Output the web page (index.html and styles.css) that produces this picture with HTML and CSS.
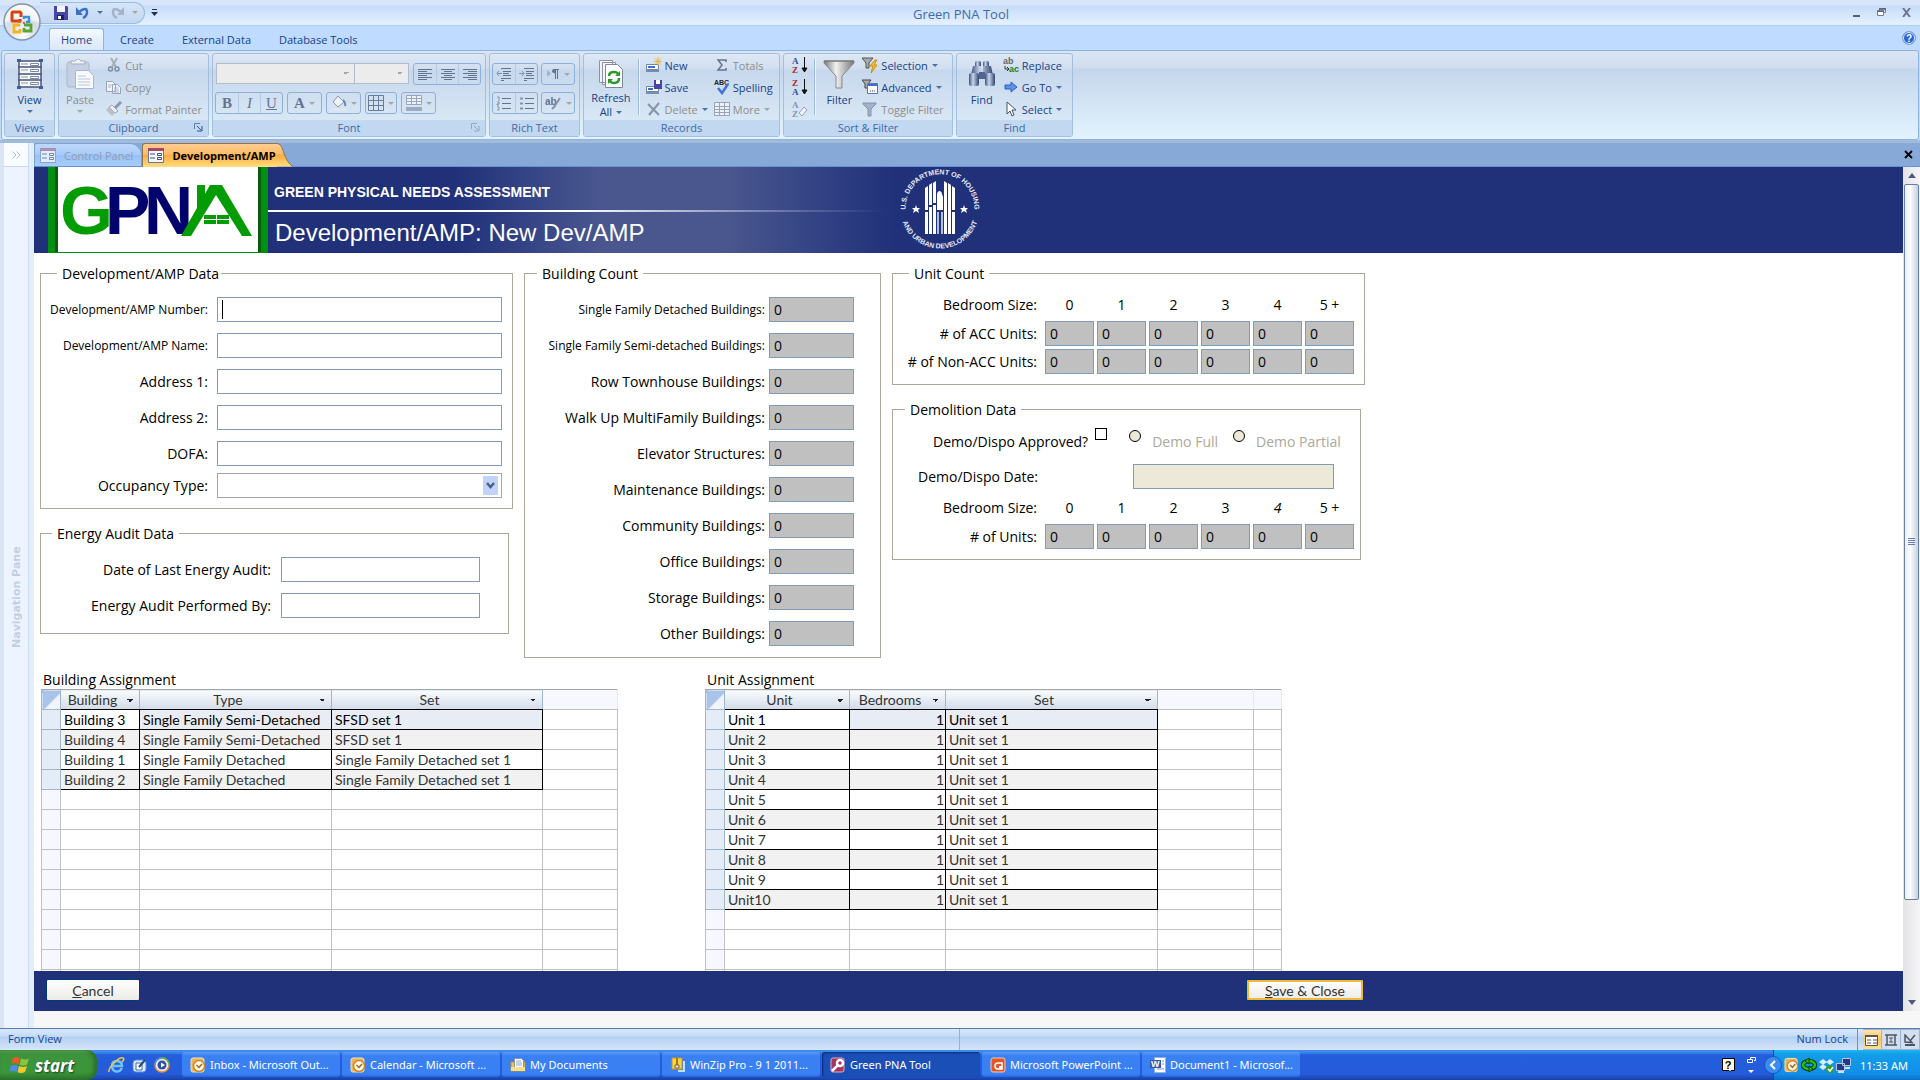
FILE: index.html
```html
<!DOCTYPE html>
<html lang="en">
<head>
    <meta charset="UTF-8">
    <meta name="viewport" content="width=device-width, initial-scale=1.0">
    <title>Green PNA Tool</title>
    <link rel="stylesheet" href="styles.css">
</head>
<body>

<header class="titlebar">
    <button class="orb" aria-label="Office Button">
        <svg width="38" height="38" viewBox="0 0 38 38">
            <defs>
                <radialGradient id="orbFill" cx="50%" cy="85%" r="80%">
                    <stop offset="0" stop-color="#ffffff"/>
                    <stop offset="0.55" stop-color="#d3dbe6"/>
                    <stop offset="1" stop-color="#f4f6f9"/>
                </radialGradient>
            </defs>
            <circle cx="19" cy="19" r="18" fill="url(#orbFill)" stroke="#8493a8" stroke-width="1.5"/>
            <path d="M2 19a17 17 0 0 1 34 0q-17-5-34 0z" fill="#fff" opacity="0.6"/>
            <g fill="none" stroke-width="3">
                <path d="M17 16v2h-7a1 1 0 0 1-1-1v-7a1 1 0 0 1 1-1h7l1 1v4" stroke="#d8420f"/>
                <path d="M21 16v-2h5v5h-3" stroke="#3d8fd8" stroke-width="2.4"/>
                <path d="M17 22h-6v7h6v-3" stroke="#f5b31c" stroke-width="2.8"/>
                <path d="M21 22h7v6h-7v-3" stroke="#58a534" stroke-width="2.8"/>
            </g>
            <path d="M15 18h3v2h-3zM20 19h2v2h-2z" fill="#e8641b"/>
        </svg>
    </button>
    <div class="quick">
        <button aria-label="Save"><svg width="14" height="14" viewBox="0 0 14 14"><path d="M0 0h13l1 1v13H0z" fill="#4845a8"/><path d="M3 0h8v6H3z" fill="#f1f4fb"/><path d="M3 9h7v5H3z" fill="#20205c"/><path d="M4 10h3v3H4z" fill="#fff"/></svg></button>
        <button aria-label="Undo"><svg width="13" height="13" viewBox="0 0 13 13"><path d="M3 6q8-6 8 0 0 4-4 6" fill="none" stroke="#3d6fc6" stroke-width="2.5"/><path d="M0 1v8h7z" fill="#3d6fc6"/></svg></button>
        <i class="arrow"></i>
        <button aria-label="Redo" disabled><svg width="13" height="13" viewBox="0 0 13 13"><path d="M10 6Q2 0 2 6q0 4 4 6" fill="none" stroke="#a3b3ca" stroke-width="2.5"/><path d="M13 1v8H6z" fill="#a3b3ca"/></svg></button>
        <i class="arrow off"></i>
    </div>
    <button class="customize" aria-label="Customize"><svg width="7" height="7" viewBox="0 0 7 7"><path d="M1 0h5v1H1zM0 3h7L3.500 7z" fill="#1d2f5c"/></svg></button>
    <h1 class="title">Green PNA Tool</h1>
    <div class="winbtns">
        <button aria-label="Minimize"><svg width="9" height="12" viewBox="0 0 9 12"><path d="M1 8h7v2H1z" fill="#555f70"/></svg></button>
        <button aria-label="Restore"><svg width="9" height="9" viewBox="0 0 9 9"><path d="M2.500 3V.5h6v4H7" fill="none" stroke="#6c7f9c"/><path d="M.5 3.500h6v4h-6z" fill="#fff" stroke="#6c7f9c"/><path d="M2 1h7M0 3h7" stroke="#555f70" stroke-width="1.500"/></svg></button>
        <button aria-label="Close"><svg width="9" height="9" viewBox="0 0 9 9"><path d="M1 0l7 9M8 0L1 9" stroke="#6a7690" stroke-width="2"/></svg></button>
    </div>
</header>

<nav class="tabs">
    <a href="#" class="active">Home</a>
    <a href="#">Create</a>
    <a href="#">External Data</a>
    <a href="#">Database Tools</a>
    <button class="help" aria-label="Help"><svg width="14" height="14" viewBox="0 0 14 14"><circle cx="7" cy="7" r="6.500" fill="#2a64d2" stroke="#86a3cf"/><circle cx="7" cy="7" r="5.500" fill="none" stroke="#dbe9ff"/><text x="7" y="11" text-anchor="middle" font-size="10" class="glyph" fill="#fff">?</text></svg></button>
</nav>

<section class="ribbon">
    <div class="group views">
        <div class="tools">
            <button class="big">
                <svg width="26" height="30" viewBox="0 0 26 30"><path d="M2 2h22v26H2z" fill="#f5f8fc" stroke="#49567c" stroke-width="1.500"/><path d="M1 8h24M1 15h24M1 21h24" stroke="#49567c" stroke-width="1.500"/><path d="M4 5h7M4 11h7M4 18h7M4 24h7" stroke="#8d97ad"/><path d="M13.500 4.500h8v2h-8zM13.500 10.500h8v2h-8zM13.500 17.500h8v2h-8zM13.500 23.500h8v2h-8z" fill="#fff" stroke="#7d88a3"/><path d="M0 0h4v3H0zM22 0h4v3h-4zM0 27h4v3H0zM22 27h4v3h-4z" fill="#3f5da0"/></svg>
                <span>View</span><i class="arrow"></i>
            </button>
        </div>
        <h2>Views</h2>
    </div>
    <div class="group clipboard">
        <div class="tools">
            <button class="big" disabled>
                <svg width="28" height="30" viewBox="0 0 28 30"><rect x="1" y="3" width="22" height="25" rx="2" fill="#c5d0e2" stroke="#a9b8cf"/><path d="M5 5h14V2h-4l-2-2h-2L9 2H5z" fill="#eef2f8" stroke="#a3adbf"/><path d="M9.500 11.500h13l5 5v13h-18z" fill="#f7f9fc" stroke="#a9b8cf"/><path d="M12 17h8M12 20h12M12 23h12M12 26h12" stroke="#b9c7de"/></svg>
                <span>Paste</span><i class="arrow off"></i>
            </button>
            <div class="stack">
                <button class="cmd" disabled><svg width="16" height="16" viewBox="0 0 16 16"><path d="M5 1l5 9M11 1L6 10" stroke="#a7aebb" stroke-width="2"/><circle cx="4.500" cy="12" r="2" fill="none" stroke="#7e8ca6" stroke-width="1.500"/><circle cx="11" cy="12" r="2" fill="none" stroke="#7e8ca6" stroke-width="1.500"/></svg>Cut</button>
                <button class="cmd" disabled><svg width="16" height="16" viewBox="0 0 16 16"><path d="M.5 2.500h6l3 3v7h-9zM6.500 5.500h5l3 3v6h-8z" fill="#f1f4f9" stroke="#95a3bd"/><path d="M2 6h4M2 8h3M8 9h4M8 11h5M8 13h5" stroke="#aab6cc"/></svg>Copy</button>
                <button class="cmd" disabled><svg width="16" height="16" viewBox="0 0 16 16"><path d="M15 1l-6 6" stroke="#8a96ac" stroke-width="3"/><path d="M6 4l6 6-3 2-6-6z" fill="#eceff5" stroke="#9aa6ba"/><path d="M3 6l6 6-3 3-6-6z" fill="#b9c0cb"/></svg>Format Painter</button>
            </div>
        </div>
        <h2>Clipboard<svg class="launcher" width="9" height="9" viewBox="0 0 9 9"><path d="M.5 6V.5H6" fill="none" stroke="#5a7fb5"/><path d="M3 3l4 4M8 3v5H3" fill="none" stroke="#33507f"/></svg></h2>
    </div>
    <div class="group font">
        <div class="tools rows">
            <div class="line">
                <select class="face" aria-label="Font" disabled><option></option></select>
                <select class="size" aria-label="Font Size" disabled><option></option></select>
                <div class="set">
                    <button disabled aria-label="Align Left"><svg width="16" height="12" viewBox="0 0 16 12"><path d="M1 1.500h14M1 3.500h9M1 5.500h14M1 7.500h9M1 9.500h14M1 11.500h9" stroke="#66738f"/></svg></button>
                    <button disabled aria-label="Center"><svg width="16" height="12" viewBox="0 0 16 12"><path d="M1 1.500h14M4 3.500h8M1 5.500h14M4 7.500h8M1 9.500h14M4 11.500h8" stroke="#66738f"/></svg></button>
                    <button disabled aria-label="Align Right"><svg width="16" height="12" viewBox="0 0 16 12"><path d="M1 1.500h14M6 3.500h9M1 5.500h14M6 7.500h9M1 9.500h14M6 11.500h9" stroke="#66738f"/></svg></button>
                </div>
            </div>
            <div class="line">
                <div class="set letters">
                    <button disabled><b>B</b></button>
                    <button disabled><em>I</em></button>
                    <button disabled><u>U</u></button>
                </div>
                <div class="set wide"><button disabled><span class="letter">A</span><i class="arrow off"></i></button></div>
                <div class="set wide"><button disabled aria-label="Fill Color"><svg width="16" height="16" viewBox="0 0 16 16"><path d="M7 1l6 6-6 5-5-5z" fill="#eef2f7" stroke="#8a97af"/><path d="M12 5q3 2 2 6" fill="none" stroke="#7485a5" stroke-width="2"/><path d="M0 13h16v3H0z" fill="#dfe6ef"/></svg><i class="arrow off"></i></button></div>
                <div class="set mid"><button disabled aria-label="Gridlines"><svg width="16" height="16" viewBox="0 0 16 16"><path d="M.5.5h15v15H.5zM5.500 0v16M10.500 0v16M0 5.500h16M0 10.500h16" fill="none" stroke="#6b7c9b"/></svg><i class="arrow off"></i></button></div>
                <div class="set wide"><button disabled aria-label="Alternate Fill"><svg width="16" height="16" viewBox="0 0 16 16"><path d="M.5.5h15v9H.5zM5.500 0v10M10.500 0v10M0 3.500h16M0 6.500h16" fill="#eef2f7" stroke="#98a5bd"/><path d="M0 12h16v4H0z" fill="#9aa9c4"/></svg><i class="arrow off"></i></button></div>
            </div>
        </div>
        <h2>Font<svg class="launcher" width="9" height="9" viewBox="0 0 9 9"><path d="M.5 6V.5H6M3 3l4 4M8 3v5H3" fill="none" stroke="#94a5bf"/></svg></h2>
    </div>
    <div class="group rich">
        <div class="tools rows">
            <div class="line">
                <div class="set">
                    <button disabled aria-label="Decrease Indent"><svg width="16" height="15" viewBox="0 0 16 15"><path d="M5 1.500h10M7 4.500h8M7 6.500h6M7 8.500h8M5 11.500h10M5 13.500h3" stroke="#66738f"/><path d="M1 6.500h5M3 4L1 6.500 3 9" fill="none" stroke="#8593ad"/></svg></button>
                    <button disabled aria-label="Increase Indent"><svg width="16" height="15" viewBox="0 0 16 15"><path d="M5 1.500h10M7 4.500h8M7 6.500h6M7 8.500h8M5 11.500h10M5 13.500h3" stroke="#66738f"/><path d="M0 6.500h5M3 4l2 2.500L3 9" fill="none" stroke="#8593ad"/></svg></button>
                </div>
                <div class="set wide"><button disabled aria-label="Direction"><svg width="14" height="12" viewBox="0 0 14 12"><path d="M1 2v7l4-3.500z" fill="#a5b1c7"/><path d="M9.500 1v10M11.500 1v10M8 1.500h5M9 2.500v3" stroke="#66738f"/><circle cx="8" cy="3" r="2" fill="#66738f"/></svg><i class="arrow off"></i></button></div>
            </div>
            <div class="line">
                <div class="set">
                    <button disabled aria-label="Numbering"><svg width="16" height="15" viewBox="0 0 16 15"><path d="M6 2.500h9M6 7.500h9M6 12.500h9" stroke="#66738f" stroke-width="1.200"/><path d="M1 1h2v4M1 6h2v2H1v1h2M1 11h2v3H1" fill="none" stroke="#8593ad"/></svg></button>
                    <button disabled aria-label="Bullets"><svg width="16" height="15" viewBox="0 0 16 15"><path d="M6 2.500h9M6 7.500h9M6 12.500h9" stroke="#66738f" stroke-width="1.200"/><path d="M1 1.500h3v2H1zM1 6.500h3v2H1zM1 11.500h3v2H1z" fill="#8593ad"/></svg></button>
                </div>
                <div class="set wide"><button disabled aria-label="Highlight"><svg width="17" height="15" viewBox="0 0 17 15"><text x="0" y="9" font-size="10" class="glyph" fill="#66738f">ab</text><path d="M15 2l-6 9-2 2" stroke="#8593ad" stroke-width="2" fill="none"/></svg><i class="arrow off"></i></button></div>
            </div>
        </div>
        <h2>Rich Text</h2>
    </div>
    <div class="group records">
        <div class="tools">
            <button class="big">
                <svg width="26" height="30" viewBox="0 0 26 30"><path d="M1.500 1.500h13v22h-13zM4.500 3.500h13v22h-13z" fill="#f3f5f9" stroke="#8b93a5"/><path d="M7.500 5.500h12l5 5v18h-17z" fill="#fff" stroke="#7d879c"/><path d="M11 17q0-4 5-4 3 0 4 2M21 19q0 5-5 5-3 0-4-2" fill="none" stroke="#2e9a2e" stroke-width="2.500"/><path d="M22 12v5h-5zM10 25v-5h5z" fill="#2e9a2e"/></svg>
                <span>Refresh<br>All<i class="arrow"></i></span>
            </button>
            <hr>
            <div class="stack">
                <button class="cmd"><svg width="16" height="16" viewBox="0 0 16 16"><path d="M.5 7.500h12v5H.5z" fill="#fff" stroke="#6d83ad"/><path d="M2 9h7v2H2z" fill="#3b6fd0"/><path d="M0 14h13" stroke="#2b3f6b"/><path d="M12 0v9M8 4.500h8M9 1.500l6 6M15 1.500l-6 6" stroke="#eab63a"/></svg>New</button>
                <button class="cmd"><svg width="16" height="16" viewBox="0 0 16 16"><path d="M.5 7.500h12v5H.5z" fill="#fff" stroke="#6d83ad"/><path d="M2 9h5v2H2z" fill="#3b6fd0"/><path d="M0 14h13" stroke="#2b3f6b"/><path d="M8 1h8v9H8z" fill="#4845a8"/><path d="M10 1h4v4h-4z" fill="#fff"/></svg>Save</button>
                <button class="cmd" disabled><svg width="16" height="16" viewBox="0 0 16 16"><path d="M2 3l11 11M13 2L3 14" stroke="#8593ad" stroke-width="2"/></svg>Delete<i class="arrow"></i></button>
            </div>
            <div class="stack">
                <button class="cmd" disabled><svg width="16" height="16" viewBox="0 0 16 16"><path d="M12 5V3H4l4 5-4 5h8v-2" fill="none" stroke="#66738f" stroke-width="1.500"/></svg>Totals</button>
                <button class="cmd"><svg width="16" height="16" viewBox="0 0 16 16"><text x="0" y="6" font-size="7" class="glyph" fill="#222">ABC</text><path d="M4 9l4 5 6-9" fill="none" stroke="#3f74d4" stroke-width="2.500"/></svg>Spelling</button>
                <button class="cmd" disabled><svg width="16" height="16" viewBox="0 0 16 16"><path d="M.5 1.500h15v13H.5zM5.500 1v14M10.500 1v14M0 5.500h16M0 8.500h16M0 11.500h16" fill="#eef2f7" stroke="#95a3bd"/></svg>More<i class="arrow off"></i></button>
            </div>
        </div>
        <h2>Records</h2>
    </div>
    <div class="group sort">
        <div class="tools">
            <div class="stack">
                <button class="cmd" aria-label="Ascending"><svg width="16" height="18" viewBox="0 0 16 18"><text x="0" y="8" font-size="9" class="serif" fill="#2c4f9e">A</text><text x="0" y="17" font-size="9" class="serif" fill="#a12a2a">Z</text><path d="M12.500 1v14M10 12l2.500 4 2.500-4z" stroke="#111" fill="#111"/></svg></button>
                <button class="cmd" aria-label="Descending"><svg width="16" height="18" viewBox="0 0 16 18"><text x="0" y="8" font-size="9" class="serif" fill="#a12a2a">Z</text><text x="0" y="17" font-size="9" class="serif" fill="#2c4f9e">A</text><path d="M12.500 1v14M10 12l2.500 4 2.500-4z" stroke="#111" fill="#111"/></svg></button>
                <button class="cmd" aria-label="Clear Sorts" disabled><svg width="16" height="18" viewBox="0 0 16 18"><text x="0" y="8" font-size="9" class="serif" fill="#8593ad">A</text><text x="0" y="17" font-size="9" class="serif" fill="#8593ad">Z</text><path d="M7 13l5-6 3 3-5 6z" fill="#eef2f7" stroke="#95a3bd"/></svg></button>
            </div>
            <hr>
            <button class="big">
                <svg width="32" height="30" viewBox="0 0 32 30"><defs><linearGradient id="funnel"><stop offset="0" stop-color="#777"/><stop offset="0.4" stop-color="#f2f2f2"/><stop offset="1" stop-color="#777"/></linearGradient></defs><path d="M1 2h30v2L19 17v12h-6V17L1 4z" fill="url(#funnel)" stroke="#888"/><path d="M1 2h30" stroke="#6f6f6f"/></svg>
                <span>Filter</span>
            </button>
            <div class="stack">
                <button class="cmd"><svg width="16" height="16" viewBox="0 0 16 16"><path d="M0 1h11L7 6v5H4V6z" fill="#aaa" stroke="#555"/><path d="M13 3L8 9h3l-2 7 6-8h-3l3-5z" fill="#f7c331" stroke="#c98d13"/></svg>Selection<i class="arrow"></i></button>
                <button class="cmd"><svg width="16" height="16" viewBox="0 0 16 16"><path d="M0 1h9L6 5v4H3V5z" fill="#aaa" stroke="#444"/><path d="M5.500 4.500h10v10h-10z" fill="#fff" stroke="#5577b5"/><path d="M6 5h9v2H6z" fill="#3b6fd0"/><path d="M8 12h1M10 12h1M12 12h1" stroke="#333"/></svg>Advanced<i class="arrow"></i></button>
                <button class="cmd" disabled><svg width="16" height="16" viewBox="0 0 16 16"><path d="M1 2h13v1L9 8v7H6V8L1 3z" fill="#a3b2ca" stroke="#8092b0"/></svg>Toggle Filter</button>
            </div>
        </div>
        <h2>Sort &amp; Filter</h2>
    </div>
    <div class="group find">
        <div class="tools">
            <button class="big">
                <svg width="28" height="30" viewBox="0 0 28 30"><defs><linearGradient id="tube"><stop offset="0" stop-color="#3e5078"/><stop offset="0.4" stop-color="#c8d5ee"/><stop offset="1" stop-color="#33456e"/></linearGradient></defs><rect x="7" y="2" width="6" height="7" rx="2" fill="url(#tube)"/><rect x="15" y="2" width="6" height="7" rx="2" fill="url(#tube)"/><path d="M5 7h8v9H3zM15 7h8l2 9H15z" fill="url(#tube)"/><rect x="1" y="14" width="10" height="13" rx="2" fill="url(#tube)"/><rect x="17" y="14" width="10" height="13" rx="2" fill="url(#tube)"/><path d="M11 13h6v7h-6z" fill="#52648f"/></svg>
                <span>Find</span>
            </button>
            <div class="stack">
                <button class="cmd"><svg width="16" height="16" viewBox="0 0 16 16"><text x="0" y="7" font-size="9" class="glyph" fill="#666">ab</text><text x="6" y="15" font-size="9" class="glyph" fill="#1e7f1e">ac</text><path d="M2 9v3h3M4 10l2 2-2 2" fill="none" stroke="#333"/></svg>Replace</button>
                <button class="cmd"><svg width="16" height="16" viewBox="0 0 16 16"><path d="M2 6h6V3l6 5-6 5v-3H2z" fill="#5b93ec" stroke="#2e5fb8"/></svg>Go To<i class="arrow"></i></button>
                <button class="cmd"><svg width="16" height="16" viewBox="0 0 16 16"><path d="M4 1v12l3-3 2 5 2-1-2-5h4z" fill="#fff" stroke="#45526e"/></svg>Select<i class="arrow"></i></button>
            </div>
        </div>
        <h2>Find</h2>
    </div>
</section>

<div class="workspace">
    <aside class="navpane">
        <button class="expand" aria-label="Open Navigation Pane"><svg width="8" height="8" viewBox="0 0 8 8"><path d="M.5.5L4 4 .5 7.500M4.500.5L8 4 4.500 7.500" fill="none" stroke="#a9bdde"/></svg></button>
        <span>Navigation Pane</span>
    </aside>

    <div class="document">
        <div class="doctabs">
            <a href="#" class="doctab"><svg width="16" height="15" viewBox="0 0 16 15"><path d="M.5.5h15v14H.5z" fill="#e3ecfa" stroke="#8aa3cc"/><path d="M0 0h16v3H0z" fill="#a98fb5"/><path d="M2 6h5M2 10h5" stroke="#6f86b5"/><path d="M9.500 5.500h4v2h-4zM9.500 9.500h4v2h-4z" fill="#fff" stroke="#6f86b5"/></svg>Control Panel</a>
            <a href="#" class="doctab current"><svg width="16" height="15" viewBox="0 0 16 15"><path d="M.5.5h15v14H.5z" fill="#f4f6fc" stroke="#6577a5"/><path d="M0 0h16v3H0z" fill="#a64a6b"/><path d="M2 6h5M2 10h5" stroke="#3c4f86"/><path d="M9.500 5.500h4v2h-4zM9.500 9.500h4v2h-4z" fill="#fff" stroke="#3c4f86"/></svg>Development/AMP<svg class="slope" width="16" height="24" viewBox="0 0 16 24"><defs><linearGradient id="tabFill" x2="0" y2="1"><stop offset="0" stop-color="#ffcd92"/><stop offset="0.450" stop-color="#ffbb69"/><stop offset="0.500" stop-color="#ffab3f"/><stop offset="1" stop-color="#ffdf80"/></linearGradient></defs><path d="M0 .5q4 0 6 7 4 13 10 16H0z" fill="url(#tabFill)"/><path d="M0 .5q4 0 6 7 4 13 10 16" fill="none" stroke="#8c7450"/></svg></a>
            <button class="closetab" aria-label="Close Development/AMP"><svg width="9" height="9" viewBox="0 0 9 9"><path d="M1 1l7 7M8 1L1 8" stroke="#000" stroke-width="1.800"/></svg></button>
        </div>

        <div class="viewport">
            <main class="form">
                <div class="banner">
                    <svg class="logo" width="220" height="86" viewBox="0 0 220 86" role="img" aria-label="GPNA">
                        <path d="M0 0h220v86H0z" fill="#018f12"/>
                        <path d="M7 0h3v85H7zM210 0h3v85h-3z" fill="#0b5a12"/>
                        <path d="M10 0h200v85H10z" fill="#fff"/>
                        <text y="67" font-size="68" class="glyph"><tspan x="12" fill="#049c04">G</tspan><tspan x="57" fill="#02026c">P</tspan><tspan x="96" fill="#02026c">N</tspan></text>
                        <path d="M149 18h8v24l-8 8z" fill="#049c04"/>
                        <path d="M133 69L162 18h12l30 51h-10L168 28 143 69z" fill="#049c04"/>
                        <path d="M156 48h12v4h-12zM169 48h12v4h-12zM156 53h12v4h-12zM169 53h12v4h-12z" fill="#049c04"/>
                    </svg>
                    <div class="heading">
                        <p>GREEN PHYSICAL NEEDS ASSESSMENT</p>
                        <h2>Development/AMP: New Dev/AMP</h2>
                    </div>
                    <svg class="seal" width="84" height="84" viewBox="0 0 84 84">
                        <defs>
                            <path id="ringTop" d="M8.500 50a34.500 34.500 0 1 1 67 0"/>
                            <path id="ringBottom" d="M2.500 42a39.500 39.500 0 0 0 79 0"/>
                        </defs>
                        <g class="ring" fill="#e6ebf7">
                            <text><textPath href="#ringTop" startOffset="50%" text-anchor="middle">U.S. DEPARTMENT OF HOUSING</textPath></text>
                            <text><textPath href="#ringBottom" startOffset="50%" text-anchor="middle">AND URBAN DEVELOPMENT</textPath></text>
                        </g>
                        <path d="M18 38l1 3h3l-2 2 1 3-3-2-3 2 1-3-2-2h3zM66 38l1 3h3l-2 2 1 3-3-2-3 2 1-3-2-2h3z" fill="#fff"/>
                        <path d="M27 21l3-2v24h-3zM31 18l3-2v22h-3zM35 16l3-2v22h-3zM46 14l3 2v22h-3zM50 16l3 2v22h-3zM54 19l3 2v22h-3zM27 45h3v22h-3zM31 40h3v27h-3zM35 38h3v29h-3zM46 38h3v29h-3zM50 40h3v27h-3zM54 45h3v22h-3z" fill="#fff"/>
                        <path d="M39 43V28q0-4 3-4 2 1 2 3l1 3v13z" fill="#fff"/>
                        <path d="M39 45h2v22h-2zM43 45h2v22h-2z" fill="#b4bddc"/>
                    </svg>
                </div>

                <div class="body">
                    <div class="columns">
                        <div class="column">
                            <fieldset class="devdata">
                                <legend>Development/AMP Data</legend>
                                <label class="small" for="ampNumber">Development/AMP Number:</label>
                                <input type="text" id="ampNumber" class="caret">
                                <label class="small" for="ampName">Development/AMP Name:</label>
                                <input type="text" id="ampName">
                                <label for="address1">Address 1:</label>
                                <input type="text" id="address1">
                                <label for="address2">Address 2:</label>
                                <input type="text" id="address2">
                                <label for="dofa">DOFA:</label>
                                <input type="text" id="dofa">
                                <label for="occupancy">Occupancy Type:</label>
                                <div class="combo">
                                    <select id="occupancy"><option></option></select>
                                    <svg width="15" height="19" viewBox="0 0 15 19"><rect width="15" height="19" rx="1" fill="#c1d3fa"/><path d="M4 7l3.500 4L11 7" fill="none" stroke="#4d6185" stroke-width="2.500"/></svg>
                                </div>
                            </fieldset>
                            <fieldset class="energy">
                                <legend>Energy Audit Data</legend>
                                <label for="auditDate">Date of Last Energy Audit:</label>
                                <input type="text" id="auditDate">
                                <label for="auditBy">Energy Audit Performed By:</label>
                                <input type="text" id="auditBy">
                            </fieldset>
                        </div>

                        <fieldset class="buildings">
                            <legend>Building Count</legend>
                            <label class="small" for="b1">Single Family Detached Buildings:</label>
                            <input type="text" id="b1" value="0" readonly>
                            <label class="small" for="b2">Single Family Semi-detached Buildings:</label>
                            <input type="text" id="b2" value="0" readonly>
                            <label for="b3">Row Townhouse Buildings:</label>
                            <input type="text" id="b3" value="0" readonly>
                            <label for="b4">Walk Up MultiFamily Buildings:</label>
                            <input type="text" id="b4" value="0" readonly>
                            <label for="b5">Elevator Structures:</label>
                            <input type="text" id="b5" value="0" readonly>
                            <label for="b6">Maintenance Buildings:</label>
                            <input type="text" id="b6" value="0" readonly>
                            <label for="b7">Community Buildings:</label>
                            <input type="text" id="b7" value="0" readonly>
                            <label for="b8">Office Buildings:</label>
                            <input type="text" id="b8" value="0" readonly>
                            <label for="b9">Storage Buildings:</label>
                            <input type="text" id="b9" value="0" readonly>
                            <label for="b10">Other Buildings:</label>
                            <input type="text" id="b10" value="0" readonly>
                        </fieldset>

                        <div class="column">
                            <fieldset class="units">
                                <legend>Unit Count</legend>
                                <table class="counts">
                                    <tr><th>Bedroom Size:</th><td>0</td><td>1</td><td>2</td><td>3</td><td>4</td><td>5 +</td></tr>
                                    <tr><th># of ACC Units:</th><td><input value="0" aria-label="ACC 0" readonly></td><td><input value="0" aria-label="ACC 1" readonly></td><td><input value="0" aria-label="ACC 2" readonly></td><td><input value="0" aria-label="ACC 3" readonly></td><td><input value="0" aria-label="ACC 4" readonly></td><td><input value="0" aria-label="ACC 5+" readonly></td></tr>
                                    <tr><th># of Non-ACC Units:</th><td><input value="0" aria-label="Non-ACC 0" readonly></td><td><input value="0" aria-label="Non-ACC 1" readonly></td><td><input value="0" aria-label="Non-ACC 2" readonly></td><td><input value="0" aria-label="Non-ACC 3" readonly></td><td><input value="0" aria-label="Non-ACC 4" readonly></td><td><input value="0" aria-label="Non-ACC 5+" readonly></td></tr>
                                </table>
                            </fieldset>
                            <fieldset class="demo">
                                <legend>Demolition Data</legend>
                                <div class="approved">
                                    <label for="approved">Demo/Dispo Approved?</label>
                                    <input type="checkbox" id="approved">
                                    <input type="radio" id="demoFull" name="demo" disabled>
                                    <label for="demoFull">Demo Full</label>
                                    <input type="radio" id="demoPartial" name="demo" disabled>
                                    <label for="demoPartial">Demo Partial</label>
                                </div>
                                <div class="demodate">
                                    <label for="demoDate">Demo/Dispo Date:</label>
                                    <input type="text" id="demoDate" disabled>
                                </div>
                                <table class="counts">
                                    <tr><th>Bedroom Size:</th><td>0</td><td>1</td><td>2</td><td>3</td><td><em>4</em></td><td>5 +</td></tr>
                                    <tr><th># of Units:</th><td><input value="0" aria-label="Units 0" readonly></td><td><input value="0" aria-label="Units 1" readonly></td><td><input value="0" aria-label="Units 2" readonly></td><td><input value="0" aria-label="Units 3" readonly></td><td><input value="0" aria-label="Units 4" readonly></td><td><input value="0" aria-label="Units 5+" readonly></td></tr>
                                </table>
                            </fieldset>
                        </div>
                    </div>

                    <div class="assignments">
                        <section>
                            <h3>Building Assignment</h3>
                            <table class="sheet" id="buildingSheet">
                                <colgroup><col class="c19"><col class="c79"><col class="c192"><col class="c211"><col></colgroup>
                                <thead><tr><th class="corner"></th><th>Building</th><th>Type</th><th>Set</th><th class="blank"></th></tr></thead>
                                <tbody></tbody>
                            </table>
                        </section>
                        <section>
                            <h3>Unit Assignment</h3>
                            <table class="sheet" id="unitSheet">
                                <colgroup><col class="c19"><col class="c125"><col class="c96"><col class="c212"><col class="c96"><col></colgroup>
                                <thead><tr><th class="corner"></th><th>Unit</th><th>Bedrooms</th><th>Set</th><th class="blank"></th><th class="blank"></th></tr></thead>
                                <tbody></tbody>
                            </table>
                        </section>
                    </div>
                </div>

                <div class="actions">
                    <button class="action"><u>C</u>ancel</button>
                    <button class="action primary"><u>S</u>ave &amp; Close</button>
                </div>
            </main>

            <div class="scrollbar">
                <i class="up"></i>
                <div class="thumb"><span></span></div>
                <i class="down"></i>
            </div>
        </div>
        <div class="gutter"></div>
    </div>
</div>

<footer class="status">
    <span class="mode">Form View</span>
    <span class="lock">Num Lock</span>
    <div class="viewbtns">
        <button class="on" aria-label="Form View"><svg width="14" height="12" viewBox="0 0 14 12"><path d="M.5 1.500h12v10H.5z" fill="#fff" stroke="#5d564a"/><path d="M0 1h13v2H0z" fill="#5d564a"/><path d="M2 6h4M2 9h4M8 6h4M8 9h4" stroke="#5d564a"/></svg></button>
        <button aria-label="Layout View"><svg width="12" height="12" viewBox="0 0 12 12"><path d="M0 1h12M0 11h12M2 1v10M10 1v10" stroke="#4c5568" stroke-width="1.500"/><path d="M4 4h4M4 8h4M6 4v4" stroke="#4c5568"/></svg></button>
        <button aria-label="Design View"><svg width="12" height="12" viewBox="0 0 12 12"><path d="M1 1v7l7 .5zM11 1L6 7" fill="none" stroke="#4c5568" stroke-width="1.500"/><path d="M1 10h10v2H1z" fill="#4c5568"/></svg></button>
    </div>
</footer>

<footer class="taskbar">
    <button class="start">
        <svg width="20" height="20" viewBox="0 0 20 20"><path d="M3 3q4-2 7 0L8.500 9q-4-2-7 0z" fill="#ee5a24"/><path d="M11 3.500q4 2 8 0L17 9.500q-4 2-7.500 0z" fill="#8bc63f"/><path d="M1 11q4-2 7 0l-1.500 6q-3-2-7 0z" fill="#4a8ff0"/><path d="M9 11q4 2 8 0l-2 6q-4 2-7.500 0z" fill="#fbc62d"/></svg>
        start
    </button>
    <div class="launch">
        <button aria-label="Internet Explorer"><svg width="17" height="17" viewBox="0 0 17 17"><path d="M14 11q-2 4-6 3.500-4-1-4-5.500 0-5 5-5 5 .5 5 5H5" fill="none" stroke="#6fc0f8" stroke-width="2.500"/><path d="M1 15Q0 12 6 6q6-6 9-5 2 1-1 4" fill="none" stroke="#f4c545" stroke-width="1.500"/></svg></button>
        <button aria-label="Show Desktop"><svg width="15" height="15" viewBox="0 0 15 15"><rect x="1" y="2" width="13" height="12" rx="3" fill="#dceafc" stroke="#4e8fdc"/><path d="M4 5h6v7H4z" fill="#fff" stroke="#3a68b5"/><path d="M13 2L7 9" stroke="#27496f" stroke-width="2"/></svg></button>
        <button aria-label="Media Player"><svg width="16" height="16" viewBox="0 0 16 16"><circle cx="8" cy="8" r="7" fill="#e9eef8" stroke="#f08c2b" stroke-width="1.500"/><path d="M8 1a7 7 0 0 1 7 7" fill="none" stroke="#5fb34a" stroke-width="1.500"/><path d="M1 8a7 7 0 0 1 7-7" fill="none" stroke="#4b8de0" stroke-width="1.500"/><circle cx="8" cy="8" r="4.500" fill="#2c4faa"/><path d="M7 5.500v5l4-2.500z" fill="#fff"/></svg></button>
    </div>
    <div class="tasks">
        <button><svg width="16" height="16" viewBox="0 0 16 16"><rect x="1" y="1" width="13" height="14" rx="2" fill="#f0b258" stroke="#fbe0ad"/><circle cx="9" cy="9" r="5.500" fill="#fff7e2" stroke="#c98a2b" stroke-width="1.500"/><path d="M6.500 8L9 10.500 12 7" fill="none" stroke="#a36a1b" stroke-width="1.500"/></svg>Inbox - Microsoft Out...</button>
        <button><svg width="16" height="16" viewBox="0 0 16 16"><rect x="1" y="1" width="13" height="14" rx="2" fill="#f0b258" stroke="#fbe0ad"/><circle cx="9" cy="9" r="5.500" fill="#fff7e2" stroke="#c98a2b" stroke-width="1.500"/><path d="M6.500 8L9 10.500 12 7" fill="none" stroke="#a36a1b" stroke-width="1.500"/></svg>Calendar - Microsoft ...</button>
        <button><svg width="16" height="16" viewBox="0 0 16 16"><path d="M1 5h14v9H1z" fill="#e9c75a" stroke="#b8902a"/><path d="M4.500 1.500h7l2 2v7h-9z" fill="#fff" stroke="#8893a8"/><path d="M6 4h5M6 6h6M6 8h6" stroke="#8fa5d0"/><path d="M1 10h14v4H1z" fill="#f7e08d"/></svg>My Documents</button>
        <button><svg width="16" height="16" viewBox="0 0 16 16"><path d="M2 1h10v11H2z" fill="#f8d548" stroke="#c6961c"/><path d="M6 1h2v7H6z" fill="#a8760f"/><path d="M5 8h4v3H5z" fill="#e0e4ea" stroke="#7d6a2c"/><path d="M8 14h6V4" fill="none" stroke="#bfe0ff" stroke-width="2"/></svg>WinZip Pro - 9 1 2011...</button>
        <button class="pressed"><svg width="16" height="16" viewBox="0 0 16 16"><rect x="1" y="1" width="13" height="14" rx="2" fill="#a5355a" stroke="#e6a9bc"/><circle cx="10" cy="6" r="3" fill="none" stroke="#fff" stroke-width="2.500"/><path d="M8 8l-6 6" stroke="#fff" stroke-width="2.500"/></svg>Green PNA Tool</button>
        <button><svg width="16" height="16" viewBox="0 0 16 16"><rect x="1" y="1" width="14" height="14" rx="2" fill="#e2562a" stroke="#f8c9a8"/><path d="M12 6H8q-3 0-3 3t3 3h4z" fill="none" stroke="#fff" stroke-width="1.500"/><path d="M9 9h3v3H9z" fill="#fff"/></svg>Microsoft PowerPoint ...</button>
        <button><svg width="16" height="16" viewBox="0 0 16 16"><path d="M4.500.5h11v15h-11z" fill="#fff" stroke="#9bb0d8"/><path d="M12 4h2M12 7h2M7 12h7" stroke="#7490c5"/><path d="M0 3h11v8H0z" fill="#2f5cae"/><text x="1" y="10" font-size="9" class="glyph" fill="#fff">W</text></svg>Document1 - Microsof...</button>
    </div>
    <div class="lang">
        <svg width="13" height="14" viewBox="0 0 13 14"><path d="M.5.5h12v12H9l-1 1-1-1H.5z" fill="#fffde8" stroke="#000"/><text x="6" y="11" text-anchor="middle" font-size="11" class="glyph">?</text></svg>
        <svg width="9" height="18" viewBox="0 0 9 18"><path d="M3.500 3V1.500h5v3H7M.5 3.500h5v3h-5z" fill="none" stroke="#fff"/><path d="M1 14h6l-3 3z" fill="#fff"/></svg>
    </div>
    <div class="tray">
        <button class="chevron" aria-label="Show hidden icons"><svg width="18" height="18" viewBox="0 0 18 18"><circle cx="9" cy="9" r="8.500" fill="#3a8df0" stroke="#1c52b8"/><path d="M11 5L7 9l4 4" fill="none" stroke="#fff" stroke-width="2"/></svg></button>
        <svg width="15" height="16" viewBox="0 0 16 16"><rect x="1" y="1" width="13" height="14" rx="2" fill="#f0b258" stroke="#fbe0ad"/><circle cx="9" cy="9" r="5.500" fill="#fff7e2" stroke="#c98a2b" stroke-width="1.500"/><path d="M6.500 8L9 10.500 12 7" fill="none" stroke="#a36a1b" stroke-width="1.500"/></svg>
        <svg width="16" height="16" viewBox="0 0 16 16"><ellipse cx="8" cy="8" rx="6" ry="4" fill="none" stroke="#063c0a" stroke-width="4.500"/><ellipse cx="8" cy="8" rx="6" ry="4" fill="none" stroke="#24c21e" stroke-width="2.500"/><path d="M8 1v6L4 4zM8 9v6l4-3z" fill="#24c21e" stroke="#063c0a"/></svg>
        <svg width="15" height="15" viewBox="0 0 15 15"><path d="M4 1l4 3-4 3-4-3zM11 1l4 3-4 3-4-3zM4 6l4 3-4 3-4-3z" fill="#d7ecfd"/><circle cx="11" cy="11" r="4" fill="#33a02c"/><path d="M9 11l2 2 3-4" fill="none" stroke="#fff" stroke-width="1.500"/></svg>
        <svg width="15" height="15" viewBox="0 0 15 15"><path d="M6.500.5h8v7h-8zM.5 5.500h8v7h-8z" fill="#243a86" stroke="#b9c4de"/><path d="M2 14h6M9 10h5" stroke="#d5dbe8" stroke-width="2"/></svg>
        <time>11:33 AM</time>
    </div>
</footer>

<script>
    const buildings = [
        ['Building 3', 'Single Family Semi-Detached', 'SFSD set 1'],
        ['Building 4', 'Single Family Semi-Detached', 'SFSD set 1'],
        ['Building 1', 'Single Family Detached', 'Single Family Detached set 1'],
        ['Building 2', 'Single Family Detached', 'Single Family Detached set 1']
    ];
    const units = [];
    for (let i = 1; i <= 10; i++) {
        units.push([i < 10 ? 'Unit ' + i : 'Unit10', '1', 'Unit set 1']);
    }

    // fills the sheet with the data rows, then with empty rows up to total
    function fillSheet(id, rows, blanks, total) {
        const body = document.querySelector('#' + id + ' tbody');
        for (let i = 0; i < total; i++) {
            const tr = document.createElement('tr');
            const data = rows[i];
            tr.className = data ? 'data' : 'empty';
            const selector = document.createElement('td');
            selector.className = 'selector';
            tr.appendChild(selector);
            for (let c = 0; c < 3; c++) {
                const td = document.createElement('td');
                td.textContent = data ? data[c] : '';
                if (data) td.className = data[c] === '1' ? 'cell number' : 'cell';
                tr.appendChild(td);
            }
            for (let b = 0; b < blanks; b++) {
                tr.appendChild(document.createElement('td'));
            }
            body.appendChild(tr);
        }
    }

    fillSheet('buildingSheet', buildings, 1, 14);
    fillSheet('unitSheet', units, 2, 14);
</script>

</body>
</html>
```
FILE: styles.css
```css
* {
    box-sizing: border-box;
}

body {
    margin: 0;
    height: 100vh;
    display: flex;
    flex-direction: column;
    overflow: hidden;
    background: #bfdbff;
    font-family: "Open Sans", "Noto Sans", sans-serif;
    font-size: 11px;
    color: #15428b;
}

h1, h2, h3, p {
    margin: 0;
    font-weight: normal;
}

button {
    margin: 0;
    padding: 0;
    border: 0;
    background: none;
    font: inherit;
    color: inherit;
}

button:disabled {
    color: #8d8d8d;
}

a {
    color: inherit;
    text-decoration: none;
}

svg {
    display: block;
    flex: none;
}

.glyph {
    font-family: "Liberation Sans", Arial, sans-serif;
    font-weight: bold;
}

.serif {
    font-family: "Liberation Serif", serif;
    font-weight: bold;
}

.arrow {
    display: inline-block;
    flex: none;
    border: 3px solid transparent;
    border-top-color: #4a6ea9;
    border-bottom: 0;
}

.arrow.off {
    border-top-color: #a5a5a5;
}

/* Title bar */
.titlebar {
    position: relative;
    flex: none;
    height: 26px;
    display: flex;
    align-items: center;
    padding-left: 40px;
    background: linear-gradient(#d7e6f9 0 5px, #c7dcf8 6px, #e3f0ff 24px);
    border-bottom: 1px solid #b0cfee;
}

.orb {
    position: absolute;
    left: 3px;
    top: 3px;
    z-index: 2;
}

.quick {
    width: 105px;
    height: 22px;
    display: flex;
    align-items: center;
    gap: 8px;
    padding-left: 14px;
    border: 1px solid #9dbbe0;
    border-left: 0;
    border-radius: 0 11px 11px 0;
    background: linear-gradient(#d6e5f8, #c3d8f2);
}

.customize {
    margin-left: 6px;
}

.title {
    flex: 1;
    text-align: center;
    padding: 3px 88px 0 0;
    font-size: 13px;
    color: #3e6aaa;
}

.winbtns {
    display: flex;
    align-items: center;
    gap: 16px;
    padding-right: 9px;
}

/* Ribbon tabs */
.tabs {
    flex: none;
    height: 24px;
    display: flex;
    align-items: flex-end;
    gap: 4px;
    padding: 0 8px 0 49px;
}

.tabs a {
    height: 22px;
    padding: 0 12px;
    line-height: 24px;
}

.tabs a.active {
    border: 1px solid #8db2e3;
    border-bottom: 0;
    border-radius: 3px 3px 0 0;
    padding: 0 11px;
    line-height: 22px;
    background: linear-gradient(#f3f9ff, #dbe7f5);
}

.help {
    margin: 0 -4px 5px auto;
}

/* Ribbon */
.ribbon {
    flex: none;
    height: 90px;
    margin: 0 1px;
    padding: 2px;
    display: flex;
    gap: 3px;
    border: 1px solid #8db2e3;
    border-radius: 3px;
    background: linear-gradient(#dbe6f4 0, #cfddee 17px, #c5d6ec 18px, #c9daee 28px, #e2f3ff 88px);
}

.group {
    display: flex;
    flex-direction: column;
    border: 1px solid #a3bfdd;
    border-radius: 3px;
    background: linear-gradient(#dde8f5 0, #d0deef 15px, #c7d8ed 16px, #d9e8f5 68px);
}

.views { width: 51px; }
.clipboard { width: 151px; }
.font { width: 274px; }
.rich { width: 91px; }
.records { width: 197px; }
.sort { width: 170px; }
.find { width: 117px; }

.tools {
    flex: 1;
    min-height: 0;
    display: flex;
    justify-content: center;
    padding: 0 2px;
}

.clipboard .tools {
    gap: 5px;
}

.group h2 {
    position: relative;
    flex: none;
    height: 16px;
    line-height: 16px;
    text-align: center;
    font-size: 11px;
    color: #3e6aaa;
    background: #c1d8f0;
}

.launcher {
    position: absolute;
    right: 5px;
    top: 3px;
}

.big {
    display: flex;
    flex-direction: column;
    align-items: center;
    align-self: flex-start;
    padding: 5px 4px 0;
    line-height: 15px;
}

.big span {
    margin: 3px 0;
}

.big br + .arrow, .big span .arrow {
    margin: 0 0 2px 4px;
}

.records .big span {
    margin: 2px 0 0;
    line-height: 14px;
}

.stack {
    display: flex;
    flex-direction: column;
    align-items: flex-start;
}

.cmd {
    height: 22px;
    display: flex;
    align-items: center;
    gap: 3px;
    padding: 0 3px;
    white-space: nowrap;
}

.cmd .arrow {
    margin-left: 1px;
}

.tools hr {
    width: 2px;
    height: 56px;
    margin: 5px 3px;
    border: 0;
    border-left: 1px solid #9ab8dc;
    background: #eef5fd;
}

.rows {
    flex-direction: column;
    justify-content: flex-start;
    gap: 7px;
    padding-top: 9px;
}

.line {
    display: flex;
    gap: 4px;
}

.line select {
    height: 21px;
    appearance: none;
    border: 1px solid #b1bdcc;
    border-radius: 0;
    opacity: 1;
    background: linear-gradient(45deg, transparent 50%, #a5a5a5 50%) right 8px center / 3px 3px no-repeat,
                linear-gradient(-45deg, transparent 50%, #a5a5a5 50%) right 5px center / 3px 3px no-repeat, #ececec;
}

.line select.face {
    width: 139px;
    margin-left: 1px;
}

.line select.size {
    width: 55px;
    margin-left: -5px;
}

.set {
    height: 22px;
    display: flex;
    border: 1px solid #8eafd8;
    border-radius: 3px;
}

.set button {
    width: 22px;
    display: flex;
    align-items: center;
    justify-content: center;
    gap: 4px;
    font-family: "Liberation Serif", serif;
    font-size: 15px;
    color: #66738f;
}

.set button + button {
    border-left: 1px solid #b4cae6;
}

.font .wide button { width: 33px; }
.font .mid button { width: 30px; }
.rich .wide button { width: 32px; }
.rich .set.wide { margin-left: -1px; }

.letter {
    font-weight: bold;
}

/* Workspace */
.workspace {
    flex: 1;
    min-height: 0;
    display: flex;
    border-top: 3px solid #a3bbd9;
    background: #87a9d7;
}

.navpane {
    flex: none;
    width: 34px;
    display: flex;
    flex-direction: column;
    align-items: center;
    padding-right: 6px;
    border-left: 4px solid #d9e5f3;
    background: linear-gradient(90deg, #edf4ff 24px, #c9dcf4 24px 25px, #e3eefb 25px);
}

.expand {
    width: 24px;
    height: 24px;
    display: flex;
    align-items: center;
    justify-content: center;
    border-bottom: 1px solid #c5d9f1;
    background: #f8fbff;
}

.navpane span {
    flex: 1;
    display: flex;
    align-items: center;
    writing-mode: vertical-rl;
    transform: rotate(180deg);
    justify-content: center;
    font-family: "DejaVu Sans", sans-serif;
    font-size: 11px;
    font-weight: bold;
    color: #c1cfe3;
}

.document {
    flex: 1;
    min-width: 0;
    display: flex;
    flex-direction: column;
}

.doctabs {
    flex: none;
    height: 24px;
    display: flex;
    border-bottom: 1px solid #6593cf;
}

.doctab {
    height: 23px;
    display: flex;
    align-items: center;
    gap: 8px;
    padding: 0 8px 0 5px;
    border: 1px solid #7ba2d6;
    border-bottom: 0;
    border-radius: 3px 12px 0 0;
    background: linear-gradient(#bcd7fd, #a9cbf9 50%, #98c1f8 52%, #a6cdfc);
    white-space: nowrap;
    color: #8f9cad;
}

.doctab.current {
    position: relative;
    height: 24px;
    padding-right: 1px;
    border-color: #8c7450;
    border-right: 0;
    border-radius: 3px 0 0 0;
    background: linear-gradient(#ffcd92, #ffbb69 45%, #ffab3f 50%, #ffdf80);
    font-weight: bold;
    color: #000;
}

.slope {
    position: absolute;
    left: 100%;
    top: -1px;
}

.closetab {
    margin: 0 7px 0 auto;
}

.viewport {
    flex: 1;
    min-height: 0;
    display: flex;
}

.gutter {
    height: 17px;
    background: #f7f7f7;
}

/* Form */
.form {
    flex: 1;
    min-width: 0;
    display: flex;
    flex-direction: column;
    background: #fff;
    font-size: 14px;
    color: #000;
}

.banner {
    flex: none;
    height: 86px;
    display: flex;
    padding-left: 14px;
    background: linear-gradient(90deg, #20317a 420px, #4a578f 570px, #4a578f 690px, #20317a 860px);
    color: #fff;
    font-family: "Liberation Sans", Arial, sans-serif;
}

.heading {
    width: 620px;
}

.heading p {
    height: 43px;
    padding: 17px 0 0 6px;
    font-size: 14px;
    line-height: 16px;
    font-weight: bold;
}

.heading h2 {
    padding: 7px 0 0 7px;
    border-top: 2px solid;
    border-image: linear-gradient(90deg, #fff 50%, #20317a) 1;
    font-size: 24px;
    line-height: 28px;
}

.seal {
    margin-left: 10px;
}

.ring {
    font-family: "Liberation Sans", Arial, sans-serif;
    font-size: 7px;
    font-weight: bold;
}

.body {
    flex: 1;
    min-height: 0;
    overflow: hidden;
    padding: 10px 6px 0;
}

.columns {
    display: grid;
    grid-template-columns: minmax(0, 473px) minmax(0, 357px) minmax(0, 473px);
    gap: 11px;
    align-items: start;
}

.column {
    display: flex;
    flex-direction: column;
}

fieldset {
    min-width: 0;
    margin: 0;
    padding: 0;
    border: 1px solid #aca899;
}

legend {
    height: 20px;
    line-height: 22px;
    margin-left: 12px;
    padding: 0 5px;
    white-space: nowrap;
}

fieldset label {
    text-align: right;
    white-space: nowrap;
}

.small {
    font-size: 12px;
}

input, select {
    min-width: 0;
    margin: 0;
    border: 1px solid #7f9db9;
    border-radius: 0;
    background-color: #fff;
    font: inherit;
    color: inherit;
}

input {
    height: 25px;
    padding: 0 4px;
}

input:read-only:not(:disabled) {
    background-color: #c0c0c0;
}

input:disabled {
    border-color: #7f9db9;
    background-color: #ece9d8;
}

.devdata, .energy, .buildings {
    display: grid;
    align-items: center;
    grid-auto-rows: 25px;
}

.devdata {
    grid-template-columns: 167px 1fr;
    gap: 11px 9px;
    padding: 14px 10px 6px 0;
}

.devdata legend {
    width: 164px;
    overflow: hidden;
    margin-left: 16px;
}

/* the last row sits closer to the one above */
.devdata > :nth-last-child(-n+2) {
    margin-top: -8px;
}

.caret {
    background: linear-gradient(#000, #000) 4px 2px / 1px 19px no-repeat;
}

.combo {
    position: relative;
    display: flex;
}

.combo select {
    flex: 1;
    height: 25px;
    appearance: none;
    border-color: #a5a5a5;
}

.combo svg {
    position: absolute;
    right: 4px;
    top: 3px;
}

.energy {
    grid-template-columns: 230px 199px;
    gap: 11px 10px;
    margin: 14px 4px 0 0;
    padding: 14px 0 15px;
}

.energy legend {
    margin-left: 11px;
}

.buildings {
    grid-template-columns: 240px 85px;
    gap: 11px 4px;
    padding: 14px 0 11px;
}

.buildings label {
    display: flex;
    justify-content: flex-end;
    margin-left: 12px;
    overflow: hidden;
}

.units {
    padding: 10px 0 7px;
}

.units legend {
    margin-left: 16px;
}

.demo {
    margin: 14px 4px 0 0;
    padding: 8px 0 7px;
}

.counts {
    border-collapse: collapse;
}

.counts th {
    width: 152px;
    padding: 0 8px 3px 0;
    font-weight: normal;
    text-align: right;
    white-space: nowrap;
}

.counts td {
    width: 52px;
    padding: 0 3px 3px 0;
    text-align: center;
}

.counts tr:first-child {
    height: 28px;
}

.counts tr:first-child > * {
    padding-bottom: 5px;
}

.counts input {
    display: block;
    width: 49px;
}

.approved {
    display: flex;
    align-items: center;
    height: 28px;
    padding-left: 40px;
}

.approved input {
    flex: none;
    width: 12px;
    height: 12px;
    padding: 0;
    appearance: none;
    border: 1px solid #000;
}

.approved input[type="checkbox"] {
    margin: 0 22px 14px 7px;
    background: #fff;
}

.approved input[type="radio"] {
    border-radius: 50%;
    margin: 0 11px 10px 0;
}

.approved input:disabled + label {
    margin-right: 15px;
    color: #aca899;
}

.demodate {
    display: flex;
    align-items: center;
    padding: 9px 26px 7px 25px;
}

.demodate label {
    flex: 1;
    text-align: left;
}

.demodate input {
    width: 201px;
}

/* Datasheets */
.assignments {
    display: grid;
    grid-template-columns: 577px 577px;
    gap: 87px;
    margin-top: 11px;
    padding-left: 1px;
}

.assignments h3 {
    height: 20px;
    padding-left: 2px;
    line-height: 22px;
    font-size: 14px;
}

.sheet {
    width: 100%;
    table-layout: fixed;
    border-collapse: collapse;
    border: 1px solid #a5a5a5;
    font-family: Lato, "Liberation Sans", sans-serif;
    color: #333;
}

.c19 { width: 19px; }
.c79 { width: 79px; }
.c96 { width: 96px; }
.c125 { width: 125px; }
.c192 { width: 192px; }
.c211 { width: 211px; }
.c212 { width: 212px; }

.sheet tr {
    height: 20px;
}

.sheet th, .sheet td {
    padding: 0 3px;
    line-height: 19px;
    font-weight: normal;
    white-space: nowrap;
    border: 1px solid #c0c0c0;
}

.sheet th {
    padding-right: 18px;
    border-color: #a5a5a5 #9eb6ce #000;
    background: linear-gradient(45deg, transparent 50%, #222 50%) right 9px top 9px / 3px 3px no-repeat,
                linear-gradient(-45deg, transparent 50%, #222 50%) right 6px top 9px / 3px 3px no-repeat,
                linear-gradient(#f9fcfd, #d3dbe9);
}

.sheet .blank {
    border-color: #a5a5a5 #e4e8f4 #c0c0c0;
    background: #f7f7ff;
}

.sheet .corner {
    background: linear-gradient(135deg, #a9c4e9 55%, #f1f5fb 55%);
    border-bottom-color: #9eb6ce;
}

.selector {
    background: #f7f7ff;
}

.sheet .data .selector {
    border-color: #9eb6ce;
    background: #e4ecf7;
}

.sheet .data .cell {
    border-color: #000;
}

.data:nth-child(even) .cell {
    background: #f1f1f1;
}

.data:first-child .cell {
    color: #000;
}

.data:first-child .cell + .cell {
    background: #e8ecf5;
}

.sheet .number {
    padding-right: 1px;
    text-align: right;
}

/* Footer buttons */
.actions {
    flex: none;
    height: 40px;
    display: flex;
    align-items: center;
    gap: 1106px;
    padding: 0 0 2px 12px;
    background: #20317a;
}

.action {
    width: 94px;
    height: 22px;
    border: 1px solid #003c74;
    border-radius: 2px;
    background: linear-gradient(#fff, #ecebe6);
    font-family: Lato, sans-serif;
    font-size: 14px;
    line-height: 17px;
    color: #333;
}

.action.primary {
    width: 118px;
    box-shadow: inset 0 0 0 2px #f8b636;
}

/* Scroll bar */
.scrollbar {
    width: 17px;
    display: flex;
    flex-direction: column;
    align-items: center;
    padding: 6px 1px;
    background: linear-gradient(90deg, #e3e3e6, #f5f5f7);
}

.up, .down {
    border: 4px solid transparent;
}

.up {
    border-top: 0;
    border-bottom: 5px solid #4a5a80;
}

.down {
    margin-top: auto;
    border-bottom: 0;
    border-top: 5px solid #4a5a80;
}

.thumb {
    width: 15px;
    height: 86%;
    margin-top: 6px;
    display: flex;
    align-items: center;
    justify-content: center;
    border: 1px solid #6a7fa8;
    border-radius: 2px;
    background: linear-gradient(90deg, #e9eff8, #fdfeff 40%, #c5d1e2);
}

.thumb span {
    width: 7px;
    height: 8px;
    background: repeating-linear-gradient(#6a7fa8 0 1px, transparent 1px 2px);
}

/* Status bar */
.status {
    flex: none;
    height: 22px;
    display: flex;
    align-items: center;
    border-top: 1px solid #567db1;
    background: linear-gradient(#d9e8fb, #c6dbf7 7px, #b3d0f5 8px, #d7e5f7);
    line-height: 19px;
}

.mode {
    width: 50%;
    height: 21px;
    padding-left: 8px;
    border-right: 1px solid #8db2e3;
}

.lock {
    height: 21px;
    margin-left: auto;
    padding-right: 9px;
}

.viewbtns {
    display: flex;
    height: 21px;
    padding-left: 5px;
    border-left: 1px solid #6f93c8;
}

.viewbtns button {
    width: 19px;
    display: flex;
    align-items: center;
    justify-content: center;
    border: 1px solid #9db4d0;
    border-left-width: 0;
    background: #d3dfee;
}

.viewbtns .on {
    background: linear-gradient(#fde3b0, #fcc25c 50%, #fee29a);
}

/* Taskbar */
.taskbar {
    flex: none;
    height: 30px;
    display: flex;
    align-items: stretch;
    background: linear-gradient(#3a86e8 0, #3f8cf3 2px, #245edb 5px, #245cdc 24px, #1941a5 30px);
    font-family: "Noto Sans", sans-serif;
    font-size: 11px;
    color: #fff;
}

.start {
    width: 97px;
    display: flex;
    align-items: center;
    gap: 5px;
    padding-left: 10px;
    border-radius: 0 10px 10px 0;
    background: linear-gradient(#5cae5c 0, #3c933c 4px, #3b963b 22px, #2c742c 30px);
    box-shadow: inset -3px 0 4px #2a6b2a;
    font-size: 17px;
    font-weight: bold;
    font-style: italic;
    text-shadow: 1px 1px 2px #1c401c;
}

.launch {
    display: flex;
    align-items: center;
    gap: 7px;
    width: 84px;
    padding-left: 11px;
}

.tasks {
    flex: 1;
    display: flex;
    gap: 2px;
    padding: 2px 0 3px 1px;
}

.tasks button {
    flex: 0 1 158px;
    min-width: 0;
    display: flex;
    align-items: center;
    gap: 4px;
    padding-left: 8px;
    border-radius: 3px;
    background: linear-gradient(#5c9bfb, #3a80f3 4px, #3980f4 22px, #2a66d8);
    white-space: nowrap;
    overflow: hidden;
}

.tasks .pressed {
    background: #1b4fb8;
    box-shadow: inset 1px 1px 2px #0c2d77;
}

.lang {
    display: flex;
    align-items: center;
    gap: 12px;
    padding-right: 17px;
}

.tray {
    display: flex;
    align-items: center;
    gap: 2px;
    padding-right: 12px;
    border-left: 1px solid #1042af;
    background: linear-gradient(#19b9f3 0, #139ee9 4px, #118dea 24px, #0d6fc4 30px);
}

.chevron {
    margin-left: -10px;
}

.tray time {
    margin-left: 7px;
}
```
